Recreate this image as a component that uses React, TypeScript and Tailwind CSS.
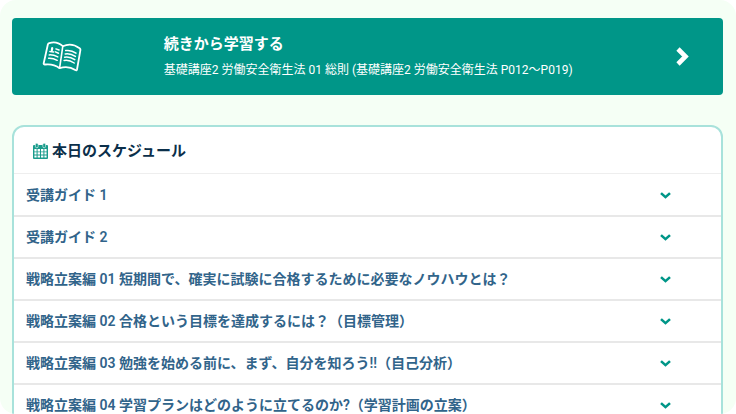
import { useState } from "react";

type IconProps = { className?: string };

const lessons = [
  "受講ガイド 1",
  "受講ガイド 2",
  "戦略立案編 01 短期間で、確実に試験に合格するために必要なノウハウとは？",
  "戦略立案編 02 合格という目標を達成するには？（目標管理）",
  "戦略立案編 03 勉強を始める前に、まず、自分を知ろう!!（自己分析）",
  "戦略立案編 04 学習プランはどのように立てるのか?（学習計画の立案）",
];

const BookIcon: React.FC<IconProps> = ({ className }) => (
  <svg
    viewBox="0 0 40 32"
    fill="none"
    stroke="currentColor"
    strokeLinecap="round"
    strokeLinejoin="round"
    className={className}
    aria-hidden="true"
  >
    <path
      strokeWidth="1.8"
      d="M5.800 3.800Q6 2.600 7.200 2.200C11.500 .8 16.500 1.400 20.800 5.200C26 2.700 32.500 3.400 37.600 7.200Q38.600 8 38.400 9.200L35 28.500Q34.600 30 33.300 29.100C28.800 26 23.500 25.200 17.600 27.200C13 23.700 8 22.900 3 23.500Q1.400 23.600 1.700 22.200Z"
    />
    <path strokeWidth="1.6" d="M20.800 5.200L17.600 27.200" />
    <path strokeWidth="2.2" d="M10.200 7.200L9.900 9.200" />
    <path
      strokeWidth="1.5"
      d="M7.900 10.600L11.600 11M13.900 7.900L17 9M13.400 10.900L16.500 12.200M7.200 13.900C10.300 13.700 13 14.500 15.800 15.900M6.600 17.300C9.500 17.100 12.400 17.800 15.200 19.300M23.700 9.600C27.300 9 31 10 34 12.100M23.200 12.900C26.800 12.300 30.300 13.300 33.400 15.400M22.600 16.200C26.200 15.600 29.700 16.600 32.800 18.700M22.100 19.500C25.700 18.900 29.200 19.900 32.200 22"
    />
  </svg>
);

const CalendarIcon: React.FC<IconProps> = ({ className }) => (
  <svg viewBox="0 0 15 16" fill="currentColor" className={className} aria-hidden="true">
    <path
      fillRule="evenodd"
      d="M1 2H14Q15 2 15 3V15Q15 16 14 16H1Q0 16 0 15V3Q0 2 1 2ZM1.400 6V8.400H3.600V6ZM4.600 6V8.400H7V6ZM8 6V8.400H10.400V6ZM11.400 6V8.400H13.600V6ZM1.400 9.300V11.600H3.600V9.300ZM4.600 9.300V11.600H7V9.300ZM8 9.300V11.600H10.400V9.300ZM11.400 9.300V11.600H13.600V9.300ZM1.400 12.500V14.600H3.600V12.500ZM4.600 12.500V14.600H7V12.500ZM8 12.500V14.600H10.400V12.500ZM11.400 12.500V14.600H13.600V12.500Z"
    />
    <rect x="2.400" y="0.300" width="2.800" height="4.400" rx="1.300" stroke="#fff" strokeWidth="0.6" />
    <rect x="9.800" y="0.300" width="2.800" height="4.400" rx="1.300" stroke="#fff" strokeWidth="0.6" />
  </svg>
);

const ChevronRight: React.FC<IconProps> = ({ className }) => (
  <svg viewBox="0 0 13 19" fill="none" stroke="currentColor" className={className} aria-hidden="true">
    <path strokeWidth="4.6" d="M2 2L9.500 9.500L2 17" />
  </svg>
);

const ChevronDown: React.FC<IconProps> = ({ className }) => (
  <svg viewBox="0 0 11 7" fill="none" stroke="currentColor" className={className} aria-hidden="true">
    <path strokeWidth="2.6" d="M1 1.100L5.500 5.100L10 1.100" />
  </svg>
);

const ContinueBanner: React.FC = () => (
  <a
    href="#continue"
    className="flex items-center rounded bg-[#009688] py-3 pr-[34px] pl-[30px] text-white"
  >
    <div className="w-1/6 shrink-0">
      <BookIcon className="h-8 w-10" />
    </div>
    <div className="flex-1 pl-[14px]">
      <h2 className="text-[15px] leading-7 font-bold">続きから学習する</h2>
      <p className="text-xs leading-[25px]">
        基礎講座2 労働安全衛生法 01 総則 (基礎講座2 労働安全衛生法 P012〜P019)
      </p>
    </div>
    <ChevronRight className="h-[19px] w-[13px]" />
  </a>
);

const Schedule: React.FC = () => {
  const [open, setOpen] = useState<number | null>(null);

  return (
    <section className="shrink-0 overflow-hidden rounded-xl border-2 border-[#a8e2db] bg-white">
      <h2 className="flex items-center gap-1 border-b border-[#eeeeee] px-[19px] pt-3 pb-2.5 text-[15px] leading-6 font-bold text-[#0b2f4a]">
        <CalendarIcon className="h-4 w-[15px] text-[#1a9c8c]" />
        本日のスケジュール
      </h2>
      <ul className="divide-y-2 divide-[#e8e8e8] pt-px">
        {lessons.map((lesson, i) => (
          <li key={lesson}>
            <button
              type="button"
              aria-expanded={open === i}
              onClick={() => setOpen(open === i ? null : i)}
              className="flex w-full items-center justify-between py-2 pr-[50px] pl-3 text-left text-sm leading-6 font-semibold text-[#31648a]"
            >
              {lesson}
              <ChevronDown className="h-[7px] w-[11px] shrink-0 text-[#009688]" />
            </button>
          </li>
        ))}
      </ul>
    </section>
  );
};

export default function App() {
  return (
    <div className="h-screen bg-white font-['Roboto','Noto_Sans_CJK_JP',sans-serif]">
      <main className="flex h-full flex-col gap-[30px] overflow-hidden rounded-2xl bg-[#f5fff5] pt-[18px] pr-[13px] pl-3">
        <ContinueBanner />
        <Schedule />
      </main>
    </div>
  );
}
